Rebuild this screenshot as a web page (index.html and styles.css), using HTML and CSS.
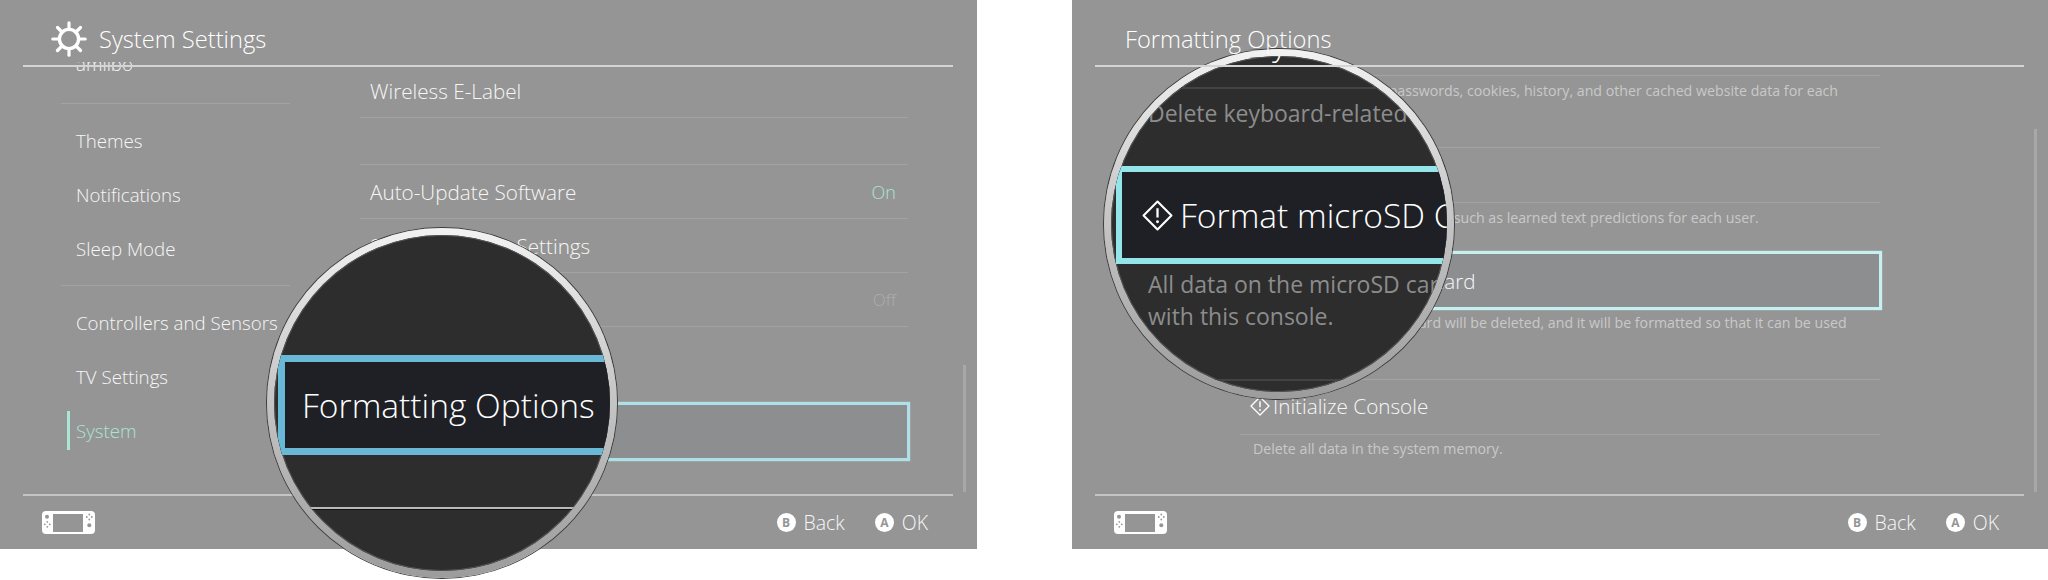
FILE: index.html
```html
<!DOCTYPE html>
<html lang="en">
<head>
    <meta charset="UTF-8">
    <meta name="viewport" content="width=device-width, initial-scale=1.0">
    <title>System Settings</title>
    <link rel="stylesheet" href="styles.css">
</head>
<body>
    <section class="panel">
        <header class="panel-header">
            <svg class="gear" viewBox="0 0 36 36">
                <circle cx="18" cy="18" r="9.6" fill="none" stroke="#fff" stroke-width="3.4"/>
                <g stroke="#fff" stroke-width="3.2" stroke-linecap="round">
                    <line x1="18" y1="1.8" x2="18" y2="8"/>
                    <line x1="18" y1="28" x2="18" y2="34.2"/>
                    <line x1="1.8" y1="18" x2="8" y2="18"/>
                    <line x1="28" y1="18" x2="34.2" y2="18"/>
                    <line x1="6.5" y1="6.5" x2="11" y2="11"/>
                    <line x1="25" y1="25" x2="29.5" y2="29.5"/>
                    <line x1="6.5" y1="29.5" x2="11" y2="25"/>
                    <line x1="25" y1="11" x2="29.5" y2="6.5"/>
                </g>
            </svg>
            <h1>System Settings</h1>
        </header>

        <div class="panel-main">
            <nav class="sidebar">
                <div class="nav-item nav-clipped">amiibo</div>
                <div class="nav-group">
                    <div class="nav-item">Themes</div>
                    <div class="nav-item">Notifications</div>
                    <div class="nav-item">Sleep Mode</div>
                </div>
                <div class="nav-group">
                    <div class="nav-item">Controllers and Sensors</div>
                    <div class="nav-item">TV Settings</div>
                    <div class="nav-item active">System</div>
                </div>
            </nav>

            <div class="list list-system">
                <div class="row row-first">Wireless E-Label</div>
                <div class="row row-blank"></div>
                <div class="row"><span>Auto-Update Software</span><span class="value-on">On</span></div>
                <div class="row"><span>System Update Settings</span></div>
                <div class="row"><span>Share Usage Data</span><span class="value-off">Off</span></div>
                <div class="list-gap"></div>
                <div class="row-focus">Formatting Options</div>
            </div>

            <div class="scrollbar scrollbar-short"></div>
        </div>

        <footer class="panel-footer">
            <svg class="console" viewBox="0 0 53 23">
                <rect width="53" height="23" rx="4" fill="#fff"/>
                <rect x="11" y="3" width="30" height="18" fill="#959595"/>
                <circle cx="5" cy="5.8" r="2" fill="#959595"/>
                <circle cx="47.3" cy="14.3" r="2" fill="#959595"/>
                <g fill="#959595">
                    <circle cx="5.3" cy="10.8" r=".9"/><circle cx="5.3" cy="15.8" r=".9"/><circle cx="2.8" cy="13.3" r=".9"/><circle cx="7.8" cy="13.3" r=".9"/>
                    <circle cx="47.3" cy="3.5" r=".9"/><circle cx="47.3" cy="8.5" r=".9"/><circle cx="44.8" cy="6" r=".9"/><circle cx="49.8" cy="6" r=".9"/>
                </g>
            </svg>
            <div class="hints">
                <div class="hint"><span class="btn">B</span>Back</div>
                <div class="hint"><span class="btn">A</span>OK</div>
            </div>
        </footer>

        <div class="lens lens-left">
            <div class="lens-inner">
                <div class="lens-focus lens-focus-blue">Formatting Options</div>
                <div class="lens-rule"></div>
            </div>
        </div>
    </section>

    <section class="panel">
        <header class="panel-header panel-header-plain">
            <h1>Formatting Options</h1>
        </header>

        <div class="panel-main">
            <div class="list list-format">
                <div class="row row-top"></div>
                <div class="desc desc-cache">Delete all saved IDs, passwords, cookies, history, and other cached website data for each user.</div>
                <div class="row row-title">Reset Keyboard</div>
                <div class="desc desc-keyboard">Delete keyboard-related data, such as learned text predictions for each user.</div>
                <div class="row-focus row-focus-cyan">
                    <svg class="warn warn-small" viewBox="0 0 30 30"><use href="#warn"/></svg>Format microSD Card
                </div>
                <div class="desc desc-card">All data on the microSD card will be deleted, and it will be formatted so that it can be used with this console.</div>
                <div class="row row-title row-init">
                    <span class="warn-line"><svg class="warn warn-small" viewBox="0 0 30 30"><use href="#warn"/></svg>Initialize Console</span>
                </div>
                <div class="desc desc-last">Delete all data in the system memory.</div>
            </div>

            <div class="scrollbar scrollbar-long"></div>
        </div>

        <footer class="panel-footer">
            <svg class="console" viewBox="0 0 53 23">
                <rect width="53" height="23" rx="4" fill="#fff"/>
                <rect x="11" y="3" width="30" height="18" fill="#959595"/>
                <circle cx="5" cy="5.8" r="2" fill="#959595"/>
                <circle cx="47.3" cy="14.3" r="2" fill="#959595"/>
                <g fill="#959595">
                    <circle cx="5.3" cy="10.8" r=".9"/><circle cx="5.3" cy="15.8" r=".9"/><circle cx="2.8" cy="13.3" r=".9"/><circle cx="7.8" cy="13.3" r=".9"/>
                    <circle cx="47.3" cy="3.5" r=".9"/><circle cx="47.3" cy="8.5" r=".9"/><circle cx="44.8" cy="6" r=".9"/><circle cx="49.8" cy="6" r=".9"/>
                </g>
            </svg>
            <div class="hints">
                <div class="hint"><span class="btn">B</span>Back</div>
                <div class="hint"><span class="btn">A</span>OK</div>
            </div>
        </footer>

        <div class="lens lens-right">
            <div class="lens-inner">
                <div class="lens-title">Reset Keyboard</div>
                <div class="lens-line"></div>
                <div class="lens-desc lens-desc-one">Delete keyboard-related data</div>
                <div class="lens-focus lens-focus-cyan">
                    <svg class="warn warn-large" viewBox="0 0 30 30"><use href="#warn"/></svg>Format microSD Card
                </div>
                <div class="lens-desc lens-desc-two">All data on the microSD card<br>with this console.</div>
                <div class="lens-line lens-line-low"></div>
            </div>
        </div>
    </section>

    <svg class="defs" width="0" height="0">
        <g id="warn">
            <path d="M15 1.5 28.5 15 15 28.5 1.5 15Z" fill="none" stroke="#fff" stroke-width="2" stroke-linejoin="round"/>
            <path d="M15 8v9" stroke="#fff" stroke-width="2.2"/>
            <circle cx="15" cy="21" r="1.4" fill="#fff"/>
        </g>
    </svg>
</body>
</html>
```

FILE: styles.css
```css
body {
    margin: 0;
    background-color: #fff;
    font-family: "Open Sans", "Noto Sans", sans-serif;
    font-weight: 300;
    color: #f7f7f7;
    display: flex;
    justify-content: space-between;
    height: 580px;
    overflow: hidden;
}
.defs {
    position: absolute;
}
.panel {
    position: relative;
    width: 976px;
    height: 549px;
    background-color: #959595;
    display: flex;
    flex-direction: column;
    box-sizing: border-box;
}
.panel:first-child {
    width: 977px;
}

/* header */
.panel-header {
    position: relative;
    z-index: 1;
    height: 67px;
    margin: 0 24px -5px 23px;
    padding: 12px 0 0 28px;
    box-sizing: border-box;
    border-bottom: 2px solid #d4d4d4;
    display: flex;
    align-items: center;
    gap: 12px;
}
.panel-header-plain {
    padding-left: 30px;
}
.panel-header h1 {
    margin: 0;
    font-size: 23.7px;
    font-weight: 300;
    color: #fff;
}
.gear {
    width: 36px;
    height: 36px;
}

/* main area */
.panel-main {
    flex: 1;
    display: flex;
    overflow: hidden;
    min-height: 0;
}
.sidebar {
    width: 229px;
    margin-left: 61px;
    flex-shrink: 0;
}
.nav-item {
    height: 54px;
    padding-left: 15px;
    display: flex;
    align-items: center;
    font-size: 18.7px;
    position: relative;
}
.nav-clipped {
    height: 41px;
    margin-top: -8px;
    box-sizing: content-box;
    align-items: flex-start;
    padding-bottom: 8px;
    line-height: 20px;
}
.nav-group {
    border-top: 1px solid #a3a3a3;
    padding: 9px 0 10px;
}
.nav-item.active {
    color: #a9e6d3;
}
.nav-item.active::before {
    content: "";
    position: absolute;
    left: 6px;
    top: 8px;
    bottom: 7px;
    width: 3px;
    background-color: #a9e6d3;
}

/* rows */
.list {
    flex-shrink: 0;
    font-size: 20.7px;
}
.list-system {
    width: 548px;
    margin-left: 70px;
}
.list-format {
    width: 640px;
    margin-left: 168px;
}
.row {
    height: 54px;
    box-sizing: border-box;
    padding: 0 12px 0 10px;
    border-bottom: 1px solid #a3a3a3;
    display: flex;
    align-items: center;
    justify-content: space-between;
}
.row-first {
    height: 56px;
    padding-top: 2px;
}
.row-blank {
    height: 47px;
}
.row-top {
    height: 14px;
}
.row-title {
    height: 55px;
}
.row-init {
    padding-bottom: 2px;
}
.list-gap {
    height: 75px;
}
.value-on {
    font-size: 18px;
    color: #a9e6d3;
}
.value-off {
    font-size: 17px;
    color: #adadad;
}
.row-focus {
    height: 59px;
    margin: 0 -2px;
    padding-left: 12px;
    box-sizing: border-box;
    border: 3px solid #aee0e8;
    background-color: #8d8e90;
    box-shadow: 0 0 1px #cfeef2;
    display: flex;
    align-items: center;
}
.row-focus-cyan {
    border-color: #c6f1f1;
    gap: 2px;
}
.desc {
    padding: 5px 20px 0 13px;
    box-sizing: border-box;
    font-size: 14.2px;
    font-weight: 400;
    line-height: 20px;
    color: #c9c9c9;
}
.desc-cache {
    height: 72px;
    border-bottom: 1px solid #a3a3a3;
}
.desc-keyboard {
    height: 48px;
}
.desc-card {
    height: 70px;
    padding-top: 3px;
    border-bottom: 1px solid #a3a3a3;
}
.desc-last {
    padding-top: 4px;
}
.warn-line {
    display: flex;
    align-items: center;
    gap: 3px;
}
.warn {
    flex-shrink: 0;
}
.warn-small {
    width: 20px;
    height: 20px;
}
.warn-large {
    width: 31px;
    height: 31px;
}
.scrollbar {
    width: 3px;
    margin-left: auto;
    margin-right: 11px;
    align-self: flex-end;
    margin-bottom: 2px;
    background-color: #a8a8a8;
}
.scrollbar-short {
    height: 127px;
}
.scrollbar-long {
    height: 363px;
}

/* footer */
.panel-footer {
    height: 55px;
    margin: 0 24px 0 23px;
    padding: 0 25px 0 19px;
    box-sizing: border-box;
    border-top: 2px solid #c4c4c4;
    display: flex;
    align-items: center;
    justify-content: space-between;
}
.console {
    width: 53px;
    height: 23px;
}
.hints {
    display: flex;
    gap: 30px;
}
.hint {
    display: flex;
    align-items: center;
    gap: 8px;
    font-size: 19.5px;
}
.btn {
    width: 19px;
    height: 19px;
    border-radius: 50%;
    background-color: #fff;
    color: #959595;
    font-size: 12px;
    font-weight: 700;
    display: flex;
    align-items: center;
    justify-content: center;
}

/* magnifiers */
.lens {
    position: absolute;
    width: 350px;
    height: 350px;
    padding: 7px;
    box-sizing: border-box;
    border-radius: 50%;
    background: linear-gradient(#f2f2f2, #c8c8c8 45%, #9c9c9c);
    box-shadow: 0 0 0 1px #3c3c3c;
}
.lens-left {
    left: 267px;
    top: 228px;
}
.lens-right {
    left: 32px;
    top: 49px;
}
.lens-inner {
    width: 336px;
    height: 336px;
    border-radius: 50%;
    background-color: #2d2d2d;
    overflow: hidden;
    box-shadow: inset 0 0 0 1px #555;
}
.lens-focus {
    height: 100px;
    width: 420px;
    box-sizing: border-box;
    background-color: #1e2026;
    display: flex;
    align-items: center;
    color: #fff;
    font-size: 33.6px;
    white-space: nowrap;
}
.lens-focus-blue {
    margin: 120px 0 0 4px;
    border: 7px solid #69b8d6;
    padding-left: 17px;
}
.lens-focus-cyan {
    height: 98px;
    margin: 0 0 0 5px;
    border: 6px solid #93e5ea;
    padding-left: 20px;
    gap: 7px;
}
.lens-rule {
    margin: 52px 0 0 31px;
    width: 270px;
    height: 2px;
    background-color: #b9b9b9;
    border-bottom: 1px solid #111;
}
.lens-title {
    margin: -33px 0 0 33px;
    height: 40px;
    line-height: 40px;
    font-size: 33px;
    color: #fff;
    white-space: nowrap;
}
.lens-line {
    margin: 24px 0 0 59px;
    width: 220px;
    height: 2px;
    background-color: #434343;
}
.lens-line-low {
    margin-top: 47px;
}
.lens-desc {
    margin-left: 37px;
    font-size: 23px;
    font-weight: 400;
    line-height: 32px;
    color: #8c8c8c;
    white-space: nowrap;
}
.lens-desc-one {
    margin-top: 8px;
    margin-bottom: 37px;
}
.lens-desc-two {
    margin-top: 4px;
}
```
